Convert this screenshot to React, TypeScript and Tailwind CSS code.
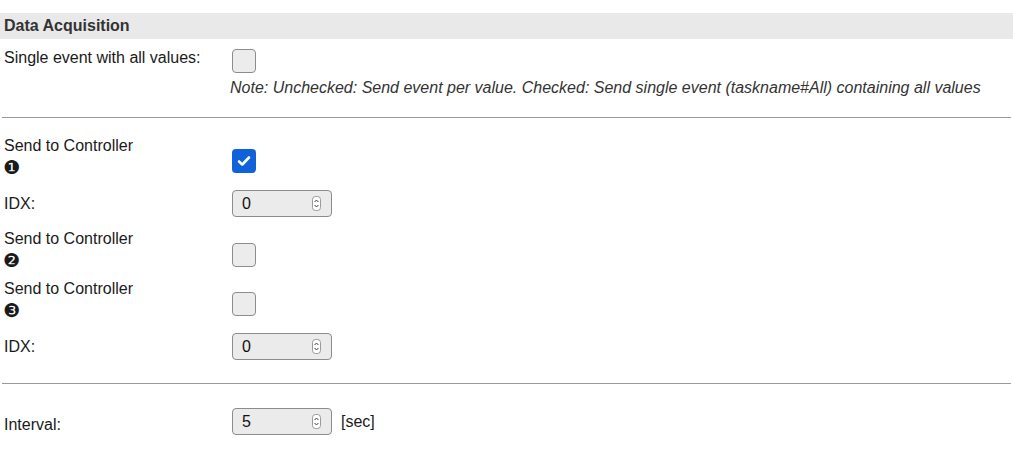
import React from "react"

const font = { fontFamily: '"Liberation Sans", Arial, sans-serif' }

function Spinner() {
  return (
    <svg width="9" height="15" viewBox="0 0 9 15" className="shrink-0">
      <rect x="0.5" y="0.5" width="8" height="14" rx="3" fill="#fff" stroke="#9a9a9a" />
      <path d="M2.6 6 L4.5 4 L6.4 6" fill="none" stroke="#444" strokeWidth="1" />
      <path d="M2.6 9 L4.5 11 L6.4 9" fill="none" stroke="#444" strokeWidth="1" />
    </svg>
  )
}

function NumberBox({ value }: { value: string }) {
  return (
    <div className="flex h-[27px] w-[100px] items-center justify-between rounded-[4px] border border-[#8c8c8c] bg-[#ebebeb] pl-[9px] pr-[10px] text-[16px] text-[#111]">
      <span>{value}</span>
      <Spinner />
    </div>
  )
}

function Checkbox({ checked }: { checked?: boolean }) {
  if (checked) {
    return (
      <div className="flex h-[24px] w-[24px] items-center justify-center rounded-[4px] bg-[#0f62d9]">
        <svg width="14" height="12" viewBox="0 0 14 12">
          <path d="M2 6.5 L5.3 9.5 L12 2.5" fill="none" stroke="#fff" strokeWidth="2.6" strokeLinecap="round" strokeLinejoin="round" />
        </svg>
      </div>
    )
  }
  return <div className="h-[24px] w-[24px] rounded-[4px] border border-[#8c8c8c] bg-[#ececec]" />
}

function ControllerRow({ glyph, checked, top, boxTop }: { glyph: string; checked?: boolean; top: string; boxTop: string }) {
  return (
    <div className={`flex items-start ${top}`}>
      <div className="w-[232px] pl-[4px] leading-[20px]">
        <div>Send to Controller</div>
        <div style={{ fontFamily: '"DejaVu Sans", sans-serif' }} className="-ml-[1px] h-[20px] text-[19px] leading-[22px]">
          {glyph}
        </div>
      </div>
      <div className={boxTop}>
        <Checkbox checked={checked} />
      </div>
    </div>
  )
}

export default function App() {
  return (
    <div style={font} className="h-[457px] w-[1013px] overflow-hidden bg-white pt-[13px] text-[16px] text-[#1a1a1a]">
      <div className="h-[26px] bg-[#e9e9e9] pl-[4px] text-[16px] font-bold leading-[26px] text-[#333]">Data Acquisition</div>

      <div className="flex items-start">
        <div className="w-[230px] pl-[4px] pt-[11px] leading-[16px]">Single event with all values:</div>
        <div className="flex flex-col">
          <div className="ml-[2px] mt-[10px]">
            <Checkbox />
          </div>
          <div className="mt-[7px] italic leading-[16px] text-[#333]">
            Note: Unchecked: Send event per value. Checked: Send single event (taskname#All) containing all values
          </div>
        </div>
      </div>

      <div className="mx-[2px] mt-[21px] h-px bg-[#999]" />

      <ControllerRow glyph="❶" checked top="mt-[18px]" boxTop="mt-[13px]" />

      <div className="mt-[14px] flex items-center">
        <div className="w-[232px] pl-[4px] leading-[20px]">IDX:</div>
        <NumberBox value="0" />
      </div>

      <ControllerRow glyph="❷" top="mt-[12px]" boxTop="mt-[14px]" />
      <ControllerRow glyph="❸" top="mt-[10px]" boxTop="mt-[13px]" />

      <div className="mt-[14px] flex items-center">
        <div className="w-[232px] pl-[4px] leading-[20px]">IDX:</div>
        <NumberBox value="0" />
      </div>

      <div className="mx-[2px] mt-[23px] h-px bg-[#999]" />

      <div className="mt-[24px] flex items-center">
        <div className="w-[232px] pl-[4px] pt-[6px] leading-[20px]">Interval:</div>
        <NumberBox value="5" />
        <span className="ml-[9px]">[sec]</span>
      </div>
    </div>
  )
}
